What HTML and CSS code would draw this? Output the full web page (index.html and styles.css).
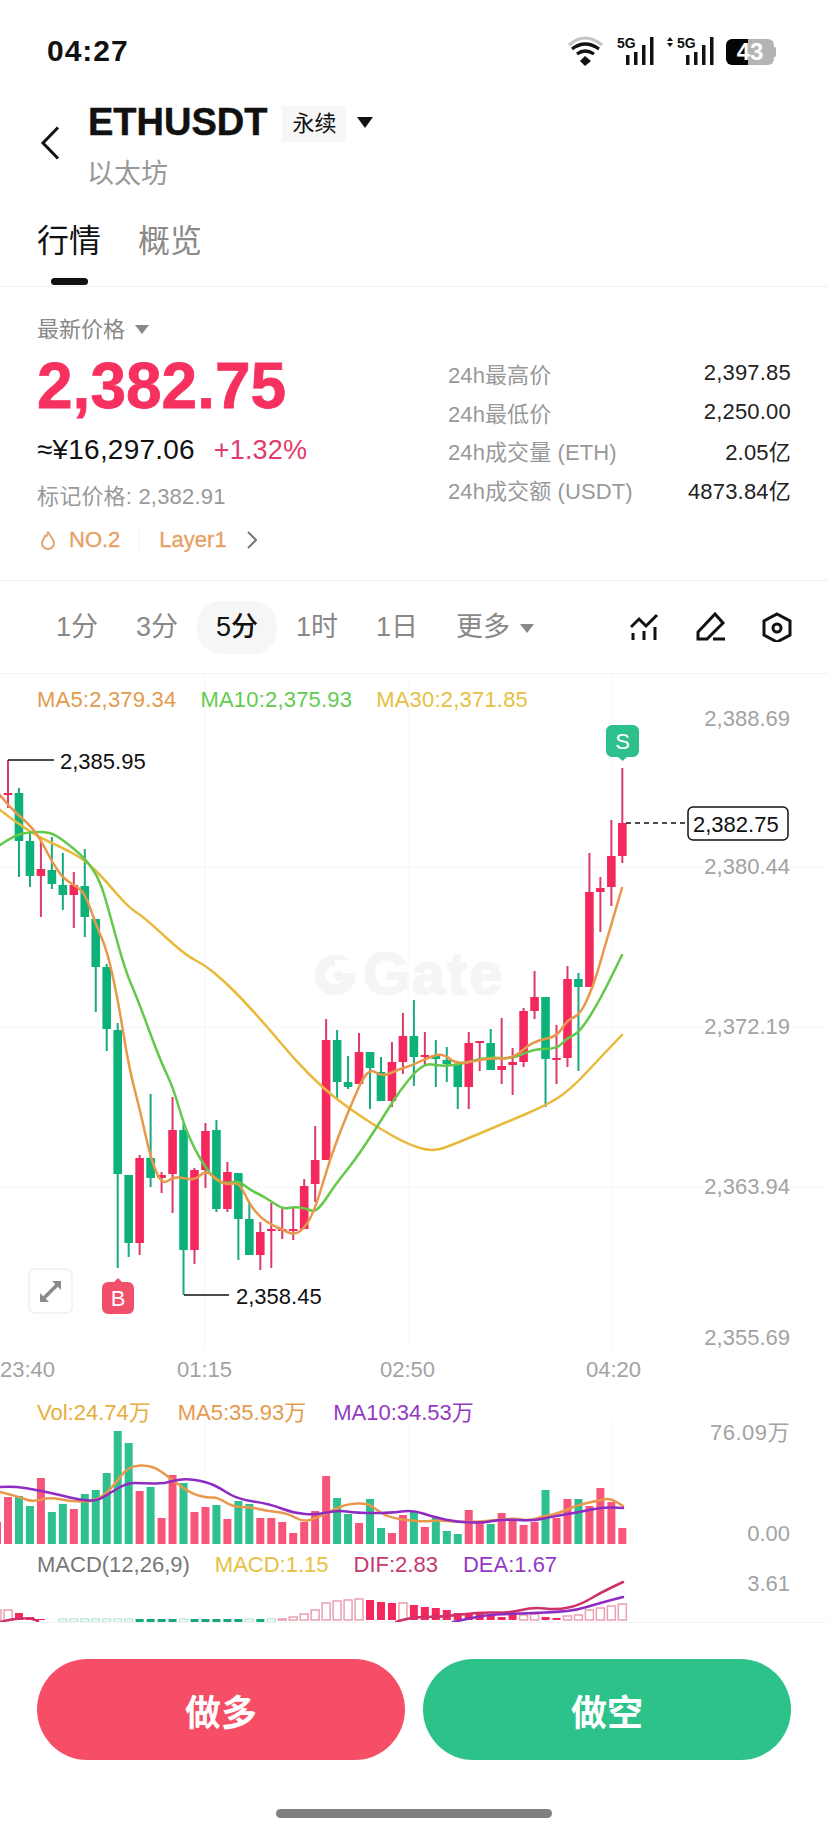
FILE: index.html
```html
<!DOCTYPE html>
<html lang="zh-CN">
<head>
    <meta charset="UTF-8">
    <meta name="viewport" content="width=device-width, initial-scale=1.0">
    <title>ETHUSDT</title>
    <link rel="stylesheet" href="styles.css">
</head>
<body>

<div class="status-bar">
    <span class="time">04:27</span>
    <svg class="status-icons" viewBox="566 35 212 32" width="212" height="32">
        <path d="M569 45 Q585 31 602 45" fill="none" stroke="#c4c4c4" stroke-width="3"/>
        <path d="M572 49 Q585 39 599 49" fill="none" stroke="#111" stroke-width="3.2"/>
        <path d="M577 54 Q585 48 594 54" fill="none" stroke="#111" stroke-width="3.2"/>
        <path d="M585 56 L591 61 L585 66 L580 61 Z" fill="#111"/>
        <text class="net" x="617" y="48">5G</text>
        <path d="M626 55h3.5v10h-3.5zM634 52h3.5v13h-3.5zM642 45h3.5v20h-3.5zM650 37h3.5v28h-3.5z" fill="#111"/>
        <path d="M670 37l3 4h-6zM670 47l3-4h-6z" fill="#111"/>
        <text class="net" x="677" y="48">5G</text>
        <path d="M686 55h3.5v10h-3.5zM694 52h3.5v13h-3.5zM702 45h3.5v20h-3.5zM710 37h3.5v28h-3.5z" fill="#111"/>
        <path d="M732 39H748V65H732a6 6 0 0 1-6-6V45a6 6 0 0 1 6-6z" fill="#050505"/>
        <path d="M748 39H768a6 6 0 0 1 6 6V59a6 6 0 0 1-6 6H748z" fill="#b4b4b4"/>
        <rect x="774" y="47" width="2" height="10" rx="1" fill="#b4b4b4"/>
        <text class="battery" x="750" y="60">43</text>
    </svg>
</div>

<header class="title-bar">
    <svg class="back" viewBox="0 0 20 34" width="20" height="34">
        <path d="M18 1.5 L3 17 L18 32.5" fill="none" stroke="#111" stroke-width="3"/>
    </svg>
    <div>
        <div class="title-row">
            <h1>ETHUSDT</h1>
            <span class="tag">永续</span>
            <span class="caret"></span>
        </div>
        <div class="subtitle">以太坊</div>
    </div>
</header>

<nav class="tabs">
    <div class="tab active">行情<i></i></div>
    <div class="tab">概览</div>
</nav>

<section class="info">
    <div class="info-left">
        <div class="price-label">最新价格<span class="caret small"></span></div>
        <div class="price">2,382.75</div>
        <div class="fiat">≈¥16,297.06<span class="change">+1.32%</span></div>
        <div class="mark">标记价格: 2,382.91</div>
        <div class="rank">
            <svg viewBox="0 0 16 20" width="16" height="20">
                <path d="M8 1.5 C9 6 14 8 14 13 A6 6 0 0 1 2 13 C2 10 4 9 5 6 C6 7 7.5 5.5 8 1.5 Z" fill="none" stroke="#dba97c" stroke-width="2"/>
            </svg>
            <span class="no">NO.2</span>
            <span class="rank-line"></span>
            <span>Layer1</span>
            <svg class="rank-arrow" viewBox="0 0 10 18" width="10" height="18">
                <path d="M1 1 L9 9 L1 17" fill="none" stroke="#777" stroke-width="2"/>
            </svg>
        </div>
    </div>
    <div class="info-right">
        <div class="stat"><span>24h最高价</span><b>2,397.85</b></div>
        <div class="stat"><span>24h最低价</span><b>2,250.00</b></div>
        <div class="stat"><span>24h成交量 (ETH)</span><b>2.05亿</b></div>
        <div class="stat"><span>24h成交额 (USDT)</span><b>4873.84亿</b></div>
    </div>
</section>

<div class="periods">
    <span class="period">1分</span>
    <span class="period">3分</span>
    <span class="period active">5分</span>
    <span class="period">1时</span>
    <span class="period">1日</span>
    <span class="period more">更多<span class="caret small"></span></span>
    <div class="tools">
        <svg viewBox="630 612 30 30" width="30" height="30">
            <path d="M631 627L639 619L646 626L657 615M633 633V640M644 631V640M655 627V640" fill="none" stroke="#111" stroke-width="3"/>
        </svg>
        <svg viewBox="696 612 30 30" width="30" height="30">
            <path d="M698 639V632L715 614L723 623L707 639ZM713 639H725" fill="none" stroke="#111" stroke-width="3"/>
        </svg>
        <svg viewBox="762 612 30 30" width="30" height="30">
            <path d="M777 614L790 621V635L777 642L764 635V621Z" fill="none" stroke="#111" stroke-width="3"/>
            <circle cx="777" cy="628" r="4" fill="none" stroke="#111" stroke-width="3"/>
        </svg>
    </div>
</div>

<section class="panel kline">
    <div class="legend">
        <span class="c-ma5">MA5:2,379.34</span>
        <span class="c-ma10">MA10:2,375.93</span>
        <span class="c-ma30">MA30:2,371.85</span>
    </div>
    <svg id="klineChart" viewBox="0 674 828 714" width="828" height="714">
        <path class="grid" d="M0 867H828M0 1027H828M0 1187H828M205 674V1350M408 674V1350M612 674V1350"/>
        <circle cx="335" cy="975" r="15" fill="none" stroke="#f4f5f5" stroke-width="11"/>
        <rect x="335" y="960" width="20" height="13" fill="#fff"/>
        <circle cx="339" cy="976" r="5" fill="#f4f5f5"/>
        <text class="watermark" x="363" y="994">Gate</text>
        <g id="candles"></g>
        <g id="klineLines"></g>

        <path class="callout" d="M8 760H54M184 1295H229"/>
        <text class="mark-text" x="60" y="761">2,385.95</text>
        <text class="mark-text" x="236" y="1296">2,358.45</text>

        <path class="last-line" d="M626 823H688"/>
        <rect class="last-box" x="688" y="807" width="100" height="33" rx="5"/>
        <text class="mark-text" x="693" y="824">2,382.75</text>

        <path d="M612 725H633a6 6 0 0 1 6 6V751a6 6 0 0 1-6 6H627L622.500 761L618 757H612a6 6 0 0 1-6-6V731a6 6 0 0 1 6-6z" fill="#2dc08c"/>
        <text class="flag" x="622.500" y="741">S</text>
        <path d="M108 1282H114L118 1278L122 1282H128a6 6 0 0 1 6 6V1308a6 6 0 0 1-6 6H108a6 6 0 0 1-6-6V1288a6 6 0 0 1 6-6z" fill="#f0506a"/>
        <text class="flag" x="118" y="1298">B</text>

        <rect x="29" y="1269" width="43" height="44" rx="6" fill="#fff" stroke="#efefef" stroke-width="1.500"/>
        <path d="M40 1302V1293L49 1302ZM61 1281V1290L52 1281Z" fill="#8a8a8a"/>
        <path d="M44 1298L57 1285" stroke="#8a8a8a" stroke-width="3.500"/>

        <text class="axis end" x="790" y="718">2,388.69</text>
        <text class="axis end" x="790" y="866">2,380.44</text>
        <text class="axis end" x="790" y="1026">2,372.19</text>
        <text class="axis end" x="790" y="1186">2,363.94</text>
        <text class="axis end" x="790" y="1337">2,355.69</text>
        <text class="axis" x="0" y="1369">23:40</text>
        <text class="axis" x="177" y="1369">01:15</text>
        <text class="axis" x="380" y="1369">02:50</text>
        <text class="axis" x="586" y="1369">04:20</text>
    </svg>
</section>

<section class="panel volume">
    <div class="legend">
        <span class="c-vol">Vol:24.74万</span>
        <span class="c-ma5">MA5:35.93万</span>
        <span class="c-purple">MA10:34.53万</span>
    </div>
    <svg id="volChart" viewBox="0 1388 828 158" width="828" height="158">
        <path class="grid" d="M205 1420V1544M408 1420V1544M612 1420V1544"/>
        <g id="volBars"></g>
        <g id="volLines"></g>
        <text class="axis end wide" x="790" y="1432">76.09万</text>
        <text class="axis end" x="790" y="1533">0.00</text>
    </svg>
</section>

<section class="panel macd">
    <div class="legend">
        <span class="c-grey">MACD(12,26,9)</span>
        <span class="c-yellow">MACD:1.15</span>
        <span class="c-dif">DIF:2.83</span>
        <span class="c-purple">DEA:1.67</span>
    </div>
    <svg id="macdChart" viewBox="0 1546 828 76" width="828" height="76">
        <g id="macdBars"></g>
        <g id="macdLines"></g>
        <text class="axis end" x="790" y="1583">3.61</text>
    </svg>
</section>

<div class="actions">
    <button class="btn long">做多</button>
    <button class="btn short">做空</button>
</div>
<div class="home-bar"></div>

<script src="chart.js"></script>
</body>
</html>
```

FILE: styles.css
```css
* {
    box-sizing: border-box;
}

body {
    font-family: "Liberation Sans", "Noto Sans CJK SC", sans-serif;
    margin: 0;
    padding: 0;
    width: 828px;
    height: 1834px;
    overflow: hidden;
    background-color: #fff;
    color: #111;
}

/* status bar */
.status-bar {
    height: 102px;
    padding: 0 50px 0 47px;
    display: flex;
    align-items: center;
    justify-content: space-between;
}

.time {
    font-size: 30px;
    font-weight: bold;
    letter-spacing: 1px;
}

.status-icons text {
    font-weight: bold;
}

.status-icons .net {
    font-size: 14px;
    fill: #111;
}

.status-icons .battery {
    font-size: 24px;
    fill: #fff;
    text-anchor: middle;
}

/* title */
.title-bar {
    height: 87px;
    padding-left: 40px;
    display: flex;
    align-items: center;
}

.back {
    margin: 0 28px 0 0;
    position: relative;
    top: -3px;
}

.title-row {
    display: flex;
    align-items: center;
    height: 40px;
}

h1 {
    margin: 0;
    font-size: 38px;
    line-height: 40px;
    font-weight: bold;
    -webkit-text-stroke: 0.5px #111;
}

.tag {
    margin-left: 15px;
    width: 64px;
    height: 36px;
    line-height: 36px;
    text-align: center;
    font-size: 22px;
    background-color: #f6f6f6;
    position: relative;
    top: 2px;
}

.caret {
    display: inline-block;
    margin-left: 11px;
    border-left: 8px solid transparent;
    border-right: 8px solid transparent;
    border-top: 11px solid #111;
}

.caret.small {
    margin-left: 10px;
    border-left-width: 7px;
    border-right-width: 7px;
    border-top: 9px solid #888;
    vertical-align: 3px;
}

.subtitle {
    margin: 17px 0 0 -1px;
    font-size: 27px;
    line-height: 30px;
    color: #999;
}

/* tabs */
.tabs {
    height: 98px;
    padding: 30px 0 0 37px;
    display: flex;
    gap: 37px;
    border-bottom: 1px solid #f0f0f0;
}

.tab {
    font-size: 32px;
    line-height: 44px;
    color: #8a8a8a;
}

.tab.active {
    color: #111;
}

.tab i {
    display: block;
    width: 37px;
    height: 7px;
    margin: 15px auto 0;
    border-radius: 4px;
    background-color: #111;
}

/* price info */
.info {
    height: 294px;
    display: flex;
    justify-content: space-between;
    padding: 28px 37px 0;
    border-bottom: 1px solid #f0f0f0;
}

.price-label {
    font-size: 22px;
    line-height: 30px;
    color: #888;
}

.price {
    margin-top: 9px;
    font-size: 64px;
    line-height: 64px;
    font-weight: bold;
    color: #f6315f;
    -webkit-text-stroke: 0.8px #f6315f;
}

.fiat {
    margin-top: 15px;
    font-size: 28px;
    line-height: 34px;
    letter-spacing: 0.2px;
}

.change {
    margin-left: 19px;
    font-size: 27px;
    color: #e23b6b;
}

.mark {
    margin-top: 15px;
    font-size: 22px;
    line-height: 30px;
    letter-spacing: 0.2px;
    color: #999;
}

.rank {
    margin-top: 13px;
    height: 30px;
    display: flex;
    align-items: center;
    font-size: 22px;
    color: #e8a064;
    padding-left: 3px;
    -webkit-text-stroke: 0.3px #e8a064;
}

.rank .no {
    margin-left: 13px;
}

.rank-line {
    width: 1px;
    height: 28px;
    margin: 0 19px;
    background-color: #f3f3f3;
}

.rank-arrow {
    margin-left: 20px;
}

.info-right {
    width: 343px;
    padding-top: 39px;
}

.stat {
    height: 38.500px;
    display: flex;
    align-items: center;
    justify-content: space-between;
    font-size: 22px;
    color: #999;
}

.stat span {
    letter-spacing: 0.1px;
}

.stat b {
    font-weight: normal;
    letter-spacing: 0.2px;
    color: #222;
}

/* period switch */
.periods {
    height: 93px;
    padding: 0 36px 0 37px;
    display: flex;
    align-items: center;
    border-bottom: 1px solid #f2f2f2;
    font-size: 27px;
    color: #888;
}

.period {
    width: 80px;
    height: 53px;
    line-height: 53px;
    text-align: center;
    border-radius: 24px;
}

.period.active {
    background-color: #f6f6f6;
    color: #111;
    font-weight: 500;
}

.period.more {
    width: auto;
    margin-left: 19px;
}

.tools {
    margin-left: auto;
    display: flex;
    gap: 36px;
}

/* chart panels */
.panel {
    position: relative;
}

.panel svg {
    display: block;
}

.legend {
    position: absolute;
    left: 37px;
    display: flex;
    font-size: 22px;
    line-height: 30px;
    white-space: nowrap;
}

.kline .legend {
    top: 11px;
    gap: 24px;
    letter-spacing: 0.2px;
}

.volume .legend {
    top: 10px;
    gap: 27px;
}

.macd .legend {
    top: 4px;
    gap: 25px;
}

.c-ma5 { color: #e39a4e; }
.c-ma10 { color: #63cc4f; }
.c-ma30 { color: #e6c03f; }
.c-vol { color: #e6ae3c; }
.c-purple { color: #9439c2; }
.c-grey { color: #777; }
.c-yellow { color: #e6c03f; }
.c-dif { color: #c8376f; }

.grid {
    fill: none;
    stroke: #f6f6f6;
    stroke-width: 1;
}

.watermark {
    font-size: 60px;
    font-weight: bold;
    letter-spacing: 2px;
    fill: #f4f5f5;
    stroke: #f4f5f5;
    stroke-width: 2px;
}

.axis {
    font-size: 22px;
    fill: #a3a3a3;
    dominant-baseline: central;
}

.axis.end {
    text-anchor: end;
}

.axis.wide {
    letter-spacing: 0.5px;
}

.mark-text {
    font-size: 22px;
    fill: #111;
    dominant-baseline: central;
}

.callout {
    fill: none;
    stroke: #111;
    stroke-width: 1.500;
}

.last-line {
    fill: none;
    stroke: #111;
    stroke-width: 1.500;
    stroke-dasharray: 5 4;
}

.last-box {
    fill: #fff;
    stroke: #111;
    stroke-width: 1.500;
}

.flag {
    font-size: 22px;
    fill: #fff;
    text-anchor: middle;
    dominant-baseline: central;
}

/* bottom buttons */
.actions {
    height: 138px;
    padding: 36px 37px 0;
    display: flex;
    gap: 18px;
    border-top: 1px solid #f5f5f5;
}

.btn {
    flex: 1;
    height: 101px;
    border: none;
    border-radius: 51px;
    font-family: inherit;
    font-size: 36px;
    font-weight: bold;
    color: #fff;
}

.btn.long {
    background-color: #f64e66;
}

.btn.short {
    background-color: #2dc28a;
}

.home-bar {
    width: 276px;
    height: 9px;
    margin: 49px auto 0;
    border-radius: 5px;
    background-color: #808080;
}
```

FILE: chart.js
```js
const NS = 'http://www.w3.org/2000/svg';
const RED = '#f5285e', GREEN = '#0cb27a';
const RED_WICK = '#dc3a6c', GREEN_WICK = '#17a886';
const VOL_RED = '#f7567a', VOL_GREEN = '#2ec08f';

function xAt(k) {
    return 8 + k * 10.97;
}

function add(parentId, tag, attrs) {
    const el = document.createElementNS(NS, tag);
    for (const key in attrs) {
        el.setAttribute(key, attrs[key]);
    }
    document.getElementById(parentId).appendChild(el);
}

// rounds the corners by going through the midpoints
function line(parentId, color, width, points) {
    let d = 'M' + points[0].join(' ');
    for (let i = 1; i < points.length - 1; i++) {
        const midX = (points[i][0] + points[i + 1][0]) / 2;
        const midY = (points[i][1] + points[i + 1][1]) / 2;
        d += ' Q' + points[i].join(' ') + ' ' + midX + ' ' + midY;
    }
    d += ' L' + points[points.length - 1].join(' ');
    add(parentId, 'path', {
        d: d,
        fill: 'none',
        stroke: color,
        'stroke-width': width,
        'stroke-linecap': 'round'
    });
}

// colour, wick top, wick bottom, body top, body bottom (page y values), starts at k = -1
const candles = [
    ['r', 790, 801, 796, 798],
    ['r', 760, 808, 793, 795],
    ['g', 788, 877, 793, 841],
    ['g', 832, 887, 841, 876],
    ['r', 840, 917, 869, 876],
    ['g', 837, 889, 870, 884],
    ['g', 853, 910, 885, 895],
    ['r', 872, 928, 885, 895],
    ['g', 849, 937, 886, 917],
    ['g', 919, 1012, 919, 967],
    ['g', 964, 1051, 967, 1029],
    ['g', 1023, 1268, 1030, 1174],
    ['g', 1175, 1257, 1175, 1243],
    ['r', 1155, 1255, 1158, 1243],
    ['g', 1094, 1187, 1158, 1178],
    ['r', 1172, 1193, 1175, 1178],
    ['r', 1097, 1213, 1130, 1174],
    ['g', 1123, 1295, 1130, 1250],
    ['r', 1168, 1264, 1170, 1250],
    ['r', 1123, 1188, 1131, 1170],
    ['g', 1120, 1212, 1130, 1209],
    ['r', 1162, 1212, 1172, 1209],
    ['g', 1173, 1260, 1173, 1219],
    ['g', 1202, 1255, 1219, 1255],
    ['r', 1222, 1270, 1232, 1255],
    ['r', 1203, 1268, 1229, 1231],
    ['r', 1207, 1239, 1229, 1231],
    ['r', 1207, 1240, 1229, 1231],
    ['r', 1179, 1229, 1186, 1229],
    ['r', 1126, 1202, 1160, 1184],
    ['r', 1019, 1160, 1040, 1160],
    ['g', 1030, 1098, 1040, 1082],
    ['g', 1056, 1089, 1082, 1087],
    ['r', 1033, 1084, 1052, 1084],
    ['g', 1052, 1109, 1052, 1068],
    ['g', 1057, 1101, 1072, 1101],
    ['r', 1042, 1107, 1062, 1101],
    ['r', 1013, 1074, 1036, 1062],
    ['g', 1000, 1086, 1036, 1057],
    ['r', 1032, 1065, 1055, 1057],
    ['g', 1040, 1087, 1055, 1059],
    ['g', 1047, 1082, 1060, 1064],
    ['g', 1064, 1109, 1064, 1087],
    ['r', 1032, 1109, 1043, 1087],
    ['r', 1041, 1071, 1041, 1043],
    ['g', 1029, 1070, 1043, 1070],
    ['r', 1018, 1084, 1066, 1070],
    ['r', 1048, 1095, 1062, 1065],
    ['r', 1008, 1067, 1011, 1062],
    ['r', 971, 1019, 997, 1011],
    ['g', 997, 1107, 997, 1059],
    ['r', 1025, 1084, 1058, 1060],
    ['r', 966, 1067, 979, 1058],
    ['g', 973, 1071, 979, 987],
    ['r', 853, 987, 892, 987],
    ['r', 877, 932, 888, 892],
    ['r', 820, 906, 856, 887],
    ['r', 768, 863, 823, 856]
];

candles.forEach((c, i) => {
    const x = xAt(i - 1);
    const up = c[0] === 'r';
    add('candles', 'rect', { x: x - 1, y: c[1], width: 2, height: c[2] - c[1], fill: up ? RED_WICK : GREEN_WICK });
    add('candles', 'rect', { x: x - 4.3, y: c[3], width: 8.6, height: c[4] - c[3], fill: up ? RED : GREEN });
});

line('klineLines', '#e8b93a', 2.5, [[0, 810], [30, 833], [63, 848], [85, 860], [105, 880], [128, 907], [145, 918], [185, 955], [205, 965], [225, 982], [243, 1000], [270, 1030], [295, 1060], [323, 1088], [347, 1107], [377, 1127], [407, 1144], [433, 1152], [457, 1143], [500, 1125], [547, 1105], [570, 1090], [600, 1058], [622, 1035]]);
line('klineLines', '#62c94a', 2.5, [[0, 845], [15, 835], [30, 832], [50, 832], [63, 840], [85, 858], [100, 880], [110, 915], [125, 970], [138, 1000], [160, 1060], [173, 1087], [184, 1125], [195, 1150], [206, 1168], [217, 1182], [228, 1183], [239, 1181], [250, 1190], [261, 1195], [272, 1202], [283, 1209], [294, 1207], [305, 1208], [314, 1212], [322, 1205], [335, 1185], [355, 1160], [377, 1127], [400, 1090], [423, 1063], [440, 1066], [457, 1065], [487, 1057], [513, 1059], [533, 1049], [557, 1049], [567, 1038], [580, 1032], [600, 1000], [622, 955]]);
line('klineLines', '#e8984a', 2.5, [[0, 795], [8, 806], [30, 825], [41, 840], [52, 862], [63, 878], [74, 885], [85, 893], [96, 925], [107, 950], [118, 1000], [129, 1068], [140, 1110], [151, 1160], [162, 1185], [173, 1177], [184, 1178], [195, 1180], [206, 1170], [217, 1180], [228, 1185], [239, 1182], [250, 1205], [261, 1218], [272, 1225], [283, 1230], [294, 1235], [305, 1228], [316, 1207], [330, 1158], [350, 1107], [368, 1067], [382, 1077], [397, 1070], [413, 1065], [427, 1058], [443, 1053], [457, 1065], [487, 1058], [513, 1059], [533, 1041], [557, 1037], [567, 1020], [580, 1015], [593, 987], [603, 953], [622, 888]]);

// volume bar tops, same k as the candles
const volume = [1522, 1497, 1496, 1506, 1478, 1512, 1504, 1509, 1494, 1490, 1473, 1431, 1443, 1491, 1487, 1518, 1475, 1483, 1512, 1507, 1505, 1519, 1501, 1504, 1518, 1518, 1522, 1533, 1522, 1511, 1476, 1498, 1514, 1523, 1499, 1528, 1533, 1515, 1511, 1527, 1518, 1531, 1534, 1510, 1522, 1524, 1513, 1518, 1525, 1522, 1490, 1518, 1499, 1499, 1506, 1488, 1502, 1528];

volume.forEach((top, i) => {
    add('volBars', 'rect', {
        x: xAt(i - 1) - 4,
        y: top,
        width: 8,
        height: 1544 - top,
        fill: candles[i][0] === 'r' ? VOL_RED : VOL_GREEN
    });
});

line('volLines', '#e8984a', 2.5, [[0, 1492], [20, 1497], [32, 1502], [50, 1497], [73, 1502], [97, 1501], [113, 1487], [128, 1466], [152, 1465], [170, 1478], [190, 1493], [207, 1498], [217, 1497], [233, 1507], [250, 1507], [267, 1511], [287, 1513], [303, 1522], [317, 1518], [333, 1510], [347, 1504], [367, 1503], [377, 1510], [390, 1518], [423, 1522], [437, 1520], [457, 1522], [480, 1522], [513, 1518], [530, 1521], [543, 1516], [557, 1514], [577, 1505], [597, 1501], [610, 1498], [623, 1506]]);
line('volLines', '#8e2bc2', 2.5, [[0, 1487], [13, 1486], [37, 1490], [60, 1495], [80, 1500], [97, 1501], [110, 1493], [127, 1483], [143, 1483], [163, 1484], [183, 1478], [207, 1482], [220, 1488], [237, 1499], [270, 1504], [293, 1513], [317, 1515], [337, 1510], [357, 1513], [390, 1513], [413, 1510], [433, 1517], [457, 1522], [483, 1523], [503, 1519], [533, 1521], [550, 1517], [580, 1512], [603, 1507], [623, 1508]]);

// macd bars: k, f = filled / h = hollow, top y (green ones hang under the zero line)
const macdRed = [[-1, 'h', 1610], [0, 'h', 1610], [1, 'f', 1613], [2, 'f', 1617], [3, 'f', 1619], [25, 'h', 1619], [26, 'h', 1617], [27, 'h', 1614], [28, 'h', 1610], [29, 'h', 1603], [30, 'h', 1601], [31, 'h', 1600], [32, 'h', 1599], [33, 'f', 1600], [34, 'f', 1602], [35, 'f', 1603], [36, 'h', 1603], [37, 'f', 1605], [38, 'f', 1607], [39, 'f', 1608], [40, 'f', 1610], [41, 'f', 1613], [42, 'f', 1613], [43, 'f', 1612], [44, 'f', 1615], [45, 'f', 1617], [46, 'f', 1615], [47, 'h', 1615], [48, 'h', 1614], [49, 'f', 1617], [50, 'f', 1618], [51, 'h', 1616], [52, 'h', 1615], [53, 'h', 1610], [54, 'h', 1608], [55, 'h', 1606], [56, 'h', 1604]];
const macdGreen = 'hhhhhhhffffhfffffhfh';

macdRed.forEach(b => {
    const filled = b[1] === 'f';
    add('macdBars', 'rect', {
        x: xAt(b[0]) - 4,
        y: b[2],
        width: 8,
        height: 1620 - b[2],
        fill: filled ? RED : '#fff',
        stroke: filled ? 'none' : '#e9a0b2',
        'stroke-width': 1.5
    });
});

macdGreen.split('').forEach((type, i) => {
    const filled = type === 'f';
    add('macdBars', 'rect', {
        x: xAt(i + 5) - 4,
        y: 1619,
        width: 8,
        height: 3,
        fill: filled ? '#16a57c' : '#fff',
        stroke: filled ? 'none' : '#a5dfc8',
        'stroke-width': 1
    });
});

line('macdLines', '#d0306a', 2.5, [[0, 1622], [12, 1619], [30, 1618], [38, 1621]]);
line('macdLines', '#d0306a', 2.5, [[396, 1622], [410, 1617], [443, 1617], [480, 1612], [510, 1613], [533, 1607], [557, 1610], [580, 1605], [600, 1593], [623, 1582]]);
line('macdLines', '#8e2bc2', 2.5, [[453, 1622], [483, 1615], [510, 1614], [533, 1613], [557, 1612], [577, 1610], [600, 1603], [623, 1597]]);
```
